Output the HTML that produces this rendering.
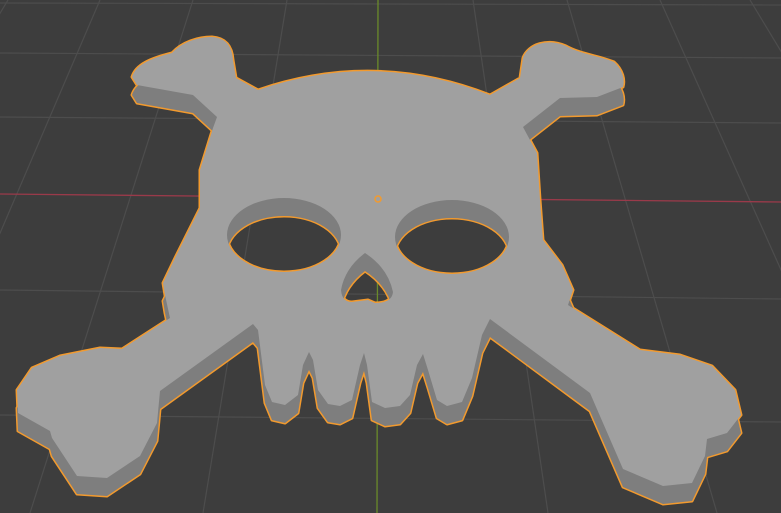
<!DOCTYPE html>
<html><head><meta charset="utf-8"><style>
html,body{margin:0;padding:0;background:#3d3d3d;}
svg{display:block;}
</style></head><body>
<svg width="781" height="513" viewBox="0 0 781 513" xmlns="http://www.w3.org/2000/svg">
<rect width="781" height="513" fill="#3d3d3d"/>
<g stroke="#4d4d4d" stroke-width="1.2" fill="none">
<line x1="0" y1="3" x2="781" y2="5"/>
<line x1="0" y1="53" x2="781" y2="58"/>
<line x1="0" y1="117" x2="781" y2="123"/>
<line x1="0" y1="290" x2="781" y2="299"/>
<line x1="0" y1="415" x2="781" y2="422"/>
<line x1="8" y1="0" x2="-300" y2="513"/>
<line x1="100" y1="0" x2="-120" y2="513"/>
<line x1="193" y1="0" x2="30" y2="513"/>
<line x1="287" y1="0" x2="203" y2="513"/>
<line x1="473" y1="0" x2="548" y2="513"/>
<line x1="567" y1="0" x2="717" y2="513"/>
<line x1="660" y1="0" x2="890" y2="513"/>
<line x1="750" y1="0" x2="1060" y2="513"/>
</g>
<line x1="0" y1="194" x2="781" y2="202" stroke="#9a3a4a" stroke-width="1.3"/>
<line x1="378" y1="0" x2="377" y2="513" stroke="#6a8a2a" stroke-width="1.3"/>
<defs>
<path id="sk" fill-rule="evenodd" d="M132,77 C136,64 152,58 172,53 C182,42 198,37 212,37 C226,38 232,46 233,60 L236,78 L258,90 Q375,50 490,95 L520,78 L523,58 C528,44 548,38 566,46 C580,54 600,56 614,62 C623,70 625,80 623,87 L597,97 L560,98 L523,127 L537,153 L540,200 L543,240 L562,265 L573,290 L568,305 L600,325 L640,350 L680,355 L712,366 L735,390 L741,415 L727,433 L707,439 L705,456 L692,483 L663,486 L623,469 L603,423 L590,393 L490,319 L482,335 L472,378 L462,402 L447,406 L437,400 L428,370 L423,354 L417,365 L410,395 L400,406 L385,408 L372,402 L367,365 L364,353 L360,365 L352,400 L340,406 L328,404 L318,390 L313,360 L309,352 L303,365 L298,395 L285,405 L272,402 L265,385 L258,330 L253,324 L160,391 L157,423 L140,456 L107,478 L77,476 L52,438 L50,431 L18,413 L17,390 L32,368 L60,356 L100,348 L122,349 L170,318 L165,295 L163,283 L175,258 L200,208 L200,170 L213,128 L217,117 L193,95 L137,85 Z
M227,235 A57,37 0 1 0 341,235 A57,37 0 1 0 227,235 Z
M395,237 A57,37 0 1 0 509,237 A57,37 0 1 0 395,237 Z
M365,253 Q345,268 341,290 Q342,302 352,302 L368,300 L375,303 Q392,303 393,292 Q388,268 365,253 Z"/>
</defs>
<g stroke="#f29a2e" stroke-width="3" fill="none" stroke-linejoin="round">
<use href="#sk"/>
<use href="#sk" transform="translate(0,18)"/>
</g>
<use href="#sk" transform="translate(0,18)" fill="#7e7e7e"/>
<use href="#sk" fill="#a0a0a0"/>
<circle cx="378" cy="199" r="3" fill="#a0a0a0" stroke="#f29a2e" stroke-width="1.5"/>
</svg>
</body></html>
